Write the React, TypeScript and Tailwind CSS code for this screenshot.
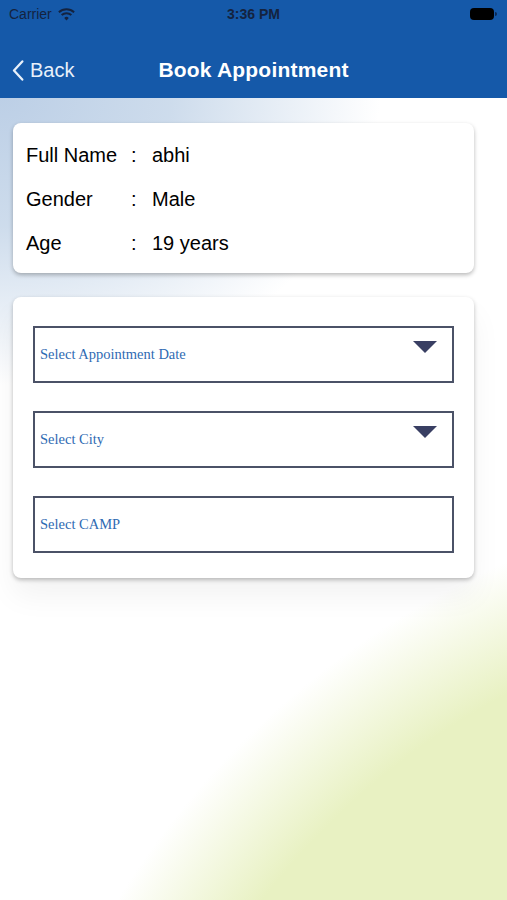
export default function App() {
  const details = [
    { label: "Full Name", value: "abhi" },
    { label: "Gender", value: "Male" },
    { label: "Age", value: "19 years" },
  ]

  const fields = [
    { label: "Select Appointment Date", dropdown: true },
    { label: "Select City", dropdown: true },
    { label: "Select CAMP", dropdown: false },
  ]

  return (
    <div className="relative h-[900px] w-full overflow-hidden bg-white bg-[radial-gradient(circle_at_850px_1350px,#e8f1c2_0,#e8f1c2_740px,rgba(255,255,255,0)_860px),radial-gradient(ellipse_380px_290px_at_0px_95px,#bccfe6_0%,rgba(200,216,234,0.9)_45%,rgba(255,255,255,0)_100%)] font-['Liberation_Sans',Arial,sans-serif]">
      {/* header */}
      <header className="h-[98px] bg-[#1559a9]">
        <div className="relative flex h-[28px] items-center px-[9px]">
          <span className="text-[14px] font-medium text-[#14233f]">Carrier</span>
          <svg viewBox="0 0 24 18" className="ml-[6px] h-[13px] w-[17px]" fill="#14233f">
            <path d="M12 17.5l3.2-3.6a4.6 4.6 0 0 0-6.4 0z" />
            <path d="M12 8.6a8.7 8.7 0 0 1 5.9 2.3l1.9-2.1A11.6 11.6 0 0 0 12 5.7a11.6 11.6 0 0 0-7.8 3.1l1.9 2.1A8.7 8.7 0 0 1 12 8.6z" />
            <path d="M12 3a14.5 14.5 0 0 1 9.8 3.8L23.7 4.7A17.4 17.4 0 0 0 12 0.1 17.4 17.4 0 0 0 0.3 4.7l1.9 2.1A14.5 14.5 0 0 1 12 3z" />
          </svg>
          <span className="absolute left-1/2 -translate-x-1/2 text-[14px] font-bold text-[#14233f]">3:36 PM</span>
          <div className="ml-auto mr-[1px] flex items-center">
            <div className="h-[12px] w-[24px] rounded-[4px] bg-black" />
            <div className="ml-[1px] h-[4px] w-[2px] rounded-r-sm bg-[#0c2a55]" />
          </div>
        </div>
        <nav className="relative mt-[14px] flex h-[56px] items-center px-[12px]">
          <svg viewBox="0 0 12 22" className="h-[21px] w-[12px]" fill="none" stroke="#e8f0fa" strokeWidth="2.4" strokeLinecap="round" strokeLinejoin="round">
            <path d="M10.5 1.5L1.8 11l8.7 9.5" />
          </svg>
          <span className="ml-[6px] text-[20px] text-[#e8f0fa]">Back</span>
          <h1 className="absolute left-1/2 -translate-x-1/2 text-[21px] font-bold tracking-[0.2px] text-white">Book Appointment</h1>
        </nav>
      </header>

      {/* patient details */}
      <section className="mx-[13px] mt-[25px] w-[461px] rounded-[8px] bg-white px-[13px] pt-[10px] pb-[8px] shadow-[0_2px_4px_rgba(0,0,0,0.28)]">
        {details.map((d) => (
          <div key={d.label} className="flex h-[44px] items-center text-[20px] text-black">
            <span className="w-[105px]">{d.label}</span>
            <span className="w-[21px]">:</span>
            <span>{d.value}</span>
          </div>
        ))}
      </section>

      {/* booking form */}
      <section className="mx-[13px] mt-[24px] flex w-[461px] flex-col gap-[28px] rounded-[8px] bg-white px-[20px] pt-[29px] pb-[25px] shadow-[0_2px_4px_rgba(0,0,0,0.25),0_18px_30px_rgba(0,0,0,0.05)]">
        {fields.map((f) => (
          <div key={f.label} className="relative flex h-[57px] items-center border-2 border-[#4b5267] px-[5px]">
            <span className="font-['Liberation_Serif','Times_New_Roman',serif] text-[14.5px] text-[#2f6bb3]">{f.label}</span>
            {f.dropdown && (
              <svg viewBox="0 0 24 12" className="absolute right-[15px] top-[13px] h-[12px] w-[24px]" fill="#393f63">
                <path d="M0 0h24L12 12z" />
              </svg>
            )}
          </div>
        ))}
      </section>
    </div>
  )
}
